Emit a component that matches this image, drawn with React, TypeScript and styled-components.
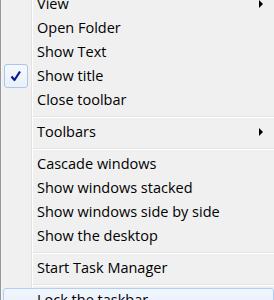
import styled, { createGlobalStyle } from 'styled-components'

const GlobalStyle = createGlobalStyle`
  html, body {
    margin: 0;
    padding: 0;
    background: #ffffff;
    overflow: hidden;
  }
  body {
    width: 274px;
    height: 300px;
  }
`

const Menu = styled.div`
  position: relative;
  width: 271px;
  margin-top: -11px;
  padding: 2px;
  background: #f0f0f0;
  border: 1px solid #979797;
  box-shadow: inset 1px 1px 0 #f5f5f5;
  font-family: 'Open Sans', 'Noto Sans', sans-serif;
  font-size: 14.5px;
  color: #000;

  /* gutter line */
  &::before {
    content: '';
    position: absolute;
    top: 0;
    bottom: 0;
    left: 30px;
    width: 1px;
    background: #e2e3e3;
    box-shadow: 1px 0 0 #ffffff;
  }
`

const Item = styled.div<{ $hot?: boolean }>`
  position: relative;
  display: flex;
  align-items: center;
  height: 24px;
  padding-left: 33px;
  box-sizing: border-box;
  white-space: nowrap;
  border: 1px solid ${(p) => (p.$hot ? '#aecff7' : 'transparent')};
  border-radius: 3px;
  background: ${(p) =>
    p.$hot ? 'linear-gradient(#f2f7fd, #e4eefb)' : 'transparent'};
  z-index: 1;
`

const Label = styled.span`
  flex: 1;
  line-height: 24px;
`

const Arrow = styled.span`
  width: 0;
  height: 0;
  margin-right: 10px;
  border-top: 4px solid transparent;
  border-bottom: 4px solid transparent;
  border-left: 4px solid #000;
`

const CheckBox = styled.span`
  position: absolute;
  left: 0;
  top: -1px;
  width: 22px;
  height: 22px;
  border: 1px solid #a9c6ec;
  border-radius: 3px;
  background: linear-gradient(#f6f9fe, #e9f0fa);
  display: flex;
  align-items: center;
  justify-content: center;
`

const Separator = styled.div`
  height: 8px;
  display: flex;
  align-items: center;
  padding-left: 30px;

  &::after {
    content: '';
    flex: 1;
    height: 1px;
    background: #e2e3e3;
    box-shadow: 0 1px 0 #ffffff;
  }
`

type Entry =
  | { label: string; sub?: boolean; checked?: boolean; hot?: boolean }
  | 'sep'

const entries: Entry[] = [
  { label: 'View', sub: true },
  { label: 'Open Folder' },
  { label: 'Show Text' },
  { label: 'Show title', checked: true },
  { label: 'Close toolbar' },
  'sep',
  { label: 'Toolbars', sub: true },
  'sep',
  { label: 'Cascade windows' },
  { label: 'Show windows stacked' },
  { label: 'Show windows side by side' },
  { label: 'Show the desktop' },
  'sep',
  { label: 'Start Task Manager' },
  'sep',
  { label: 'Lock the taskbar', hot: true },
]

const Check = () => (
  <svg width='14' height='14' viewBox='0 0 14 14'>
    <path
      d='M2.5 7.5 L5.5 11 L11 2.5'
      fill='none'
      stroke='#0b1b8f'
      strokeWidth='2.2'
      strokeLinejoin='round'
    />
  </svg>
)

export default function App() {
  return (
    <>
      <GlobalStyle />
      <Menu>
        {entries.map((e, i) =>
          e === 'sep' ? (
            <Separator key={i} />
          ) : (
            <Item key={i} $hot={e.hot}>
              {e.checked && (
                <CheckBox>
                  <Check />
                </CheckBox>
              )}
              <Label>{e.label}</Label>
              {e.sub && <Arrow />}
            </Item>
          )
        )}
      </Menu>
    </>
  )
}
